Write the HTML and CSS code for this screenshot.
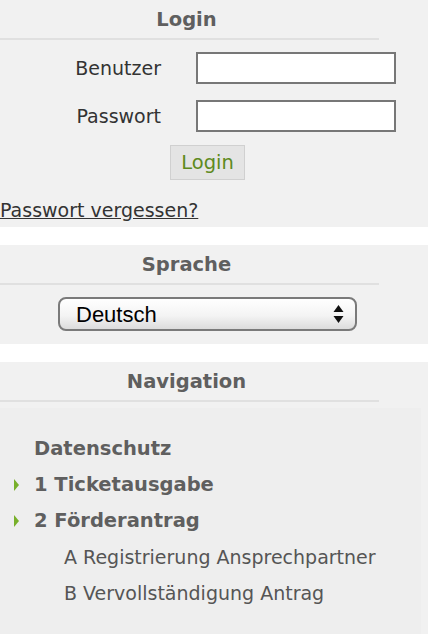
FILE: index.html
```html
<!DOCTYPE html>
<html lang="de">
<head>
  <meta charset="UTF-8" />
  <meta name="viewport" content="width=device-width, initial-scale=1.0"/>
  <title>Login</title>
  <link rel="stylesheet" href="styles.css">
</head>
<body>
  <div class="sidebar">
    <div class="box">
      <h2 class="box-title">Login</h2>
      <form class="login-form">
        <label for="user">Benutzer</label>
        <input id="user" type="text" />
        <label for="pass">Passwort</label>
        <input id="pass" type="password" />
        <button type="button" class="login-button">Login</button>
      </form>
      <a href="#" class="forgot-link">Passwort vergessen?</a>
    </div>

    <div class="box">
      <h2 class="box-title">Sprache</h2>
      <div class="language">
        <div class="select-wrap">
          <select>
            <option>Deutsch</option>
            <option>English</option>
          </select>
          <svg class="select-arrows" width="11" height="18" viewBox="0 0 11 18">
            <polygon points="5.5,0 10.5,7 0.5,7" />
            <polygon points="0.5,11 10.5,11 5.5,18" />
          </svg>
        </div>
      </div>
    </div>

    <div class="box">
      <h2 class="box-title">Navigation</h2>
      <ul class="nav">
        <li class="nav-item">Datenschutz</li>
        <li class="nav-item has-children">1 Ticketausgabe</li>
        <li class="nav-item has-children">2 Förderantrag</li>
        <li class="nav-sub">A Registrierung Ansprechpartner</li>
        <li class="nav-sub">B Vervollständigung Antrag</li>
      </ul>
    </div>
  </div>
</body>
</html>
```

FILE: styles.css
```css
:root {
  --panel-color: #f1f1f1;
  --title-color: #5f5f5f;
  --text-color: #333333;
  --green: #5e8a1c;
}

* {
  box-sizing: border-box;
}

body {
  margin: 0;
  background-color: #ffffff;
  font-family: "DejaVu Sans", Verdana, sans-serif;
  color: var(--text-color);
}

.sidebar {
  width: 428px;
}

.box {
  background-color: var(--panel-color);
  margin-bottom: 18px;
}

.box-title {
  width: 379px;
  margin: 0;
  padding: 7px 6px 0 0;
  height: 40px;
  line-height: 26px;
  text-align: center;
  font-size: 19.5px;
  font-weight: bold;
  color: var(--title-color);
  border-bottom: 2px solid #e0e0e0;
}

.login-form {
  display: grid;
  grid-template-columns: 156px 200px;
  row-gap: 16px;
  align-items: center;
  margin: 0;
  padding: 12px 0 0 40px;
}

.login-form label {
  text-align: right;
  padding-right: 35px;
  font-size: 19px;
}

.login-form input {
  height: 32px;
  border: 2px solid #777777;
  background-color: #ffffff;
  margin: 0;
}

.login-button {
  grid-column: 1 / span 2;
  justify-self: start;
  margin: -3px 0 0 130px;
  width: 75px;
  height: 35px;
  padding: 0;
  background-color: #e4e4e4;
  border: 1px solid #d0d0d0;
  color: var(--green);
  font-family: inherit;
  font-size: 19.5px;
}

.forgot-link {
  display: block;
  padding: 18px 0 5px;
  line-height: 24px;
  font-size: 19px;
  color: var(--text-color);
}

.language {
  padding: 12px 0 13px 58px;
}

.select-wrap {
  position: relative;
  width: 299px;
  height: 34px;
}

.select-wrap select {
  appearance: none;
  width: 100%;
  height: 100%;
  border: 2px solid #7a7a7a;
  border-radius: 8px;
  padding: 0 0 0 16px;
  background: linear-gradient(to bottom, #ffffff 0%, #f4f4f4 55%, #dcdcdc 100%);
  font-family: "Liberation Sans", Arial, sans-serif;
  font-size: 22px;
  color: #000000;
}

.select-arrows {
  position: absolute;
  right: 13px;
  top: 8px;
  fill: #111111;
}

.nav {
  list-style: none;
  margin: 6px 7px 0 0;
  padding: 23px 0 23px;
  background-color: #eeeeee;
}

.nav li {
  line-height: 36px;
  font-size: 19.5px;
}

.nav-item {
  position: relative;
  padding-left: 34px;
  font-weight: bold;
  color: var(--title-color);
}

.nav-item.has-children::before {
  content: "";
  position: absolute;
  left: 14px;
  top: 12px;
  border-left: 5px solid #78b02a;
  border-top: 6px solid transparent;
  border-bottom: 6px solid transparent;
}

.nav .nav-sub {
  padding-left: 64px;
  font-size: 19px;
  color: #555555;
}
```
